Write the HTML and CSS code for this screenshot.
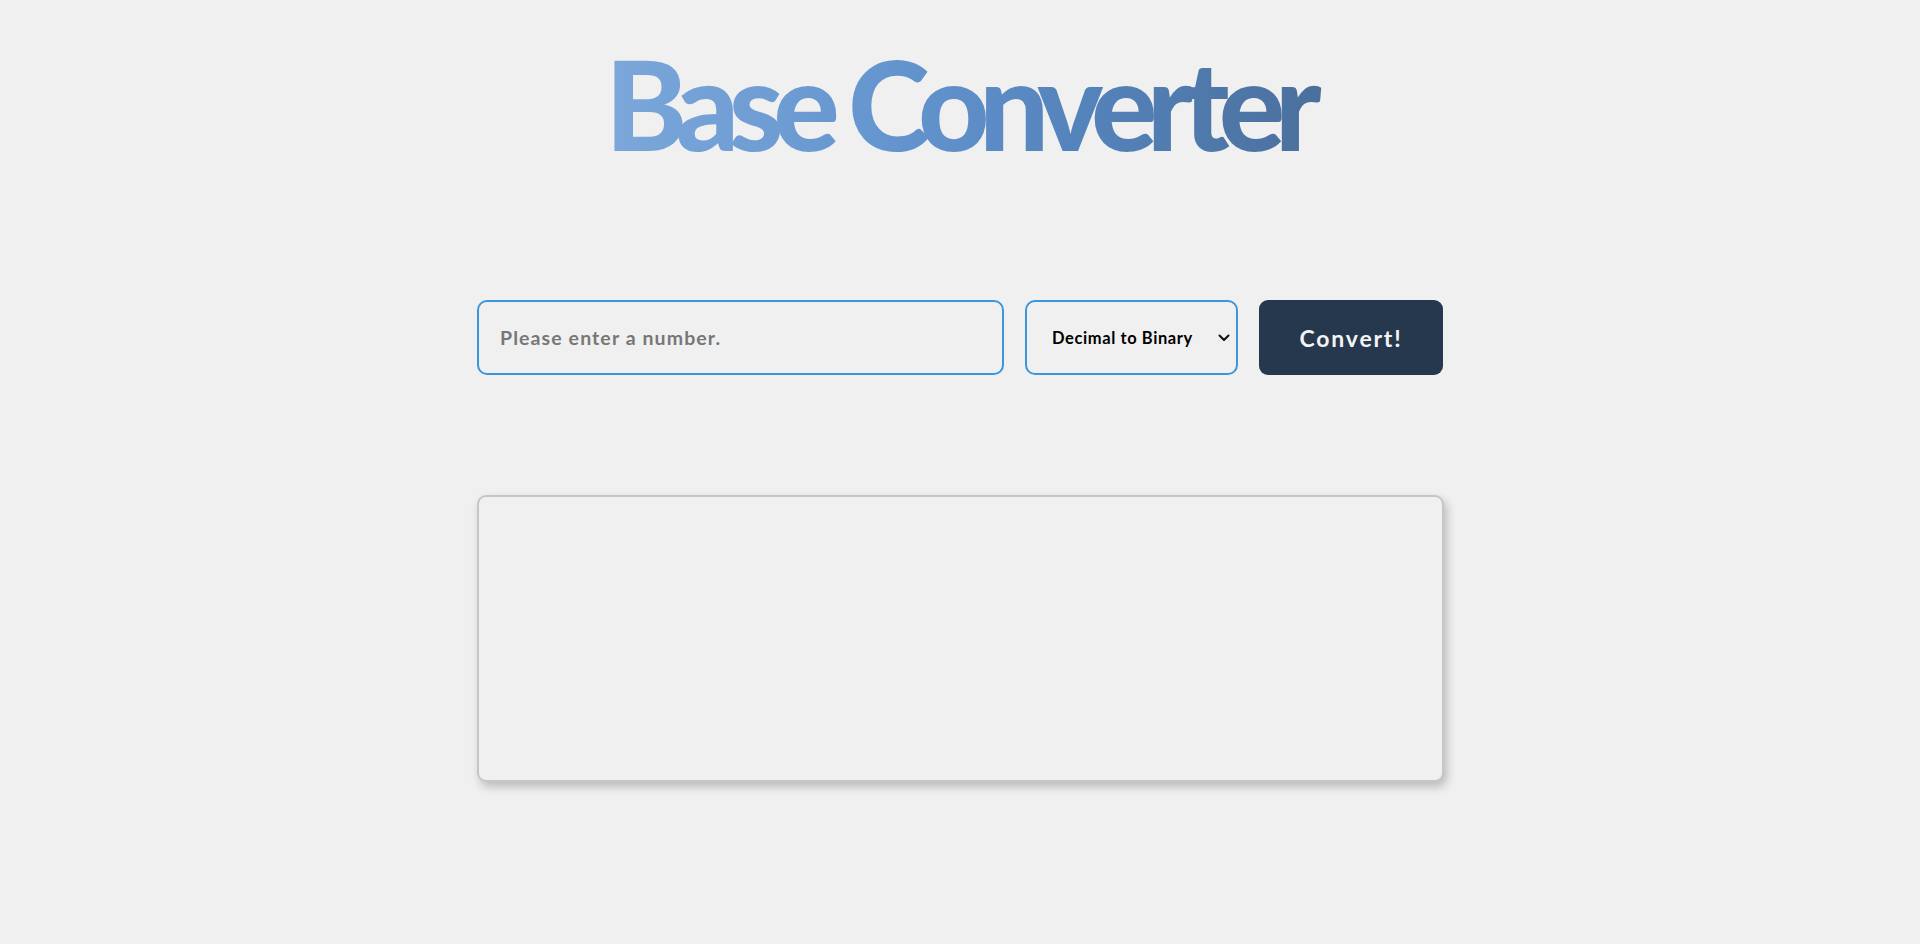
FILE: index.html
```html
<!DOCTYPE html>
<html lang="en">
<head>
<meta charset="utf-8">
<title>Base Converter</title>
<link rel="stylesheet" href="styles.css">
</head>
<body>
<main class="page">
  <h1 class="title">Base Converter</h1>
  <form class="controls" onsubmit="return false;">
    <input class="number-input" type="text" placeholder="Please enter a number.">
    <div class="select-wrap">
      <select class="mode-select">
        <option>Decimal to Binary</option>
        <option>Binary to Decimal</option>
      </select>
      <svg class="chevron" viewBox="0 0 12 8" width="12" height="8"><path d="M1.5 1.5 L6 6 L10.5 1.5" fill="none" stroke="#111" stroke-width="2" stroke-linecap="round" stroke-linejoin="round"/></svg>
    </div>
    <button class="convert-btn" type="submit">Convert!</button>
  </form>
  <section class="result"></section>
</main>
</body>
</html>
```
FILE: styles.css
```css
* { box-sizing: border-box; }
html, body { margin: 0; padding: 0; }
body {
  background: #f0f0f0;
  font-family: "Lato", "Noto Sans", sans-serif;
  min-height: 944px;
}
.page {
  display: flex;
  flex-direction: column;
  align-items: center;
}
.title {
  margin: 33px 0 0;
  font-family: "Lato", sans-serif;
  font-weight: 900;
  font-size: 124px;
  line-height: 140px;
  letter-spacing: -10.5px;
  padding: 0 12px 0 8px;
  background: linear-gradient(90deg, #7ca8da 0%, #6595cf 40%, #5584bd 65%, #4a6f9c 100%);
  -webkit-background-clip: text;
  background-clip: text;
  color: transparent;
}
.controls {
  margin-top: 127px;
  display: flex;
  gap: 21px;
  width: 966px;
}
.number-input {
  width: 527px;
  height: 75px;
  border: 2px solid #3b97dd;
  border-radius: 10px;
  background: #f0f0f0;
  padding: 0 21px;
  font-family: "Lato", sans-serif;
  font-weight: 700;
  font-size: 19.5px;
  letter-spacing: 1.1px;
  color: #333;
  outline: none;
}
.number-input::placeholder { color: #777; }
.select-wrap {
  position: relative;
  width: 213px;
  height: 75px;
}
.mode-select {
  width: 100%;
  height: 100%;
  appearance: none;
  -webkit-appearance: none;
  border: 2px solid #3b97dd;
  border-radius: 10px;
  background: #f0f0f0;
  padding: 0 0 0 25px;
  font-family: "Lato", sans-serif;
  font-weight: 700;
  font-size: 16.5px;
  letter-spacing: 0.6px;
  color: #000;
  outline: none;
}
.chevron {
  position: absolute;
  right: 8px;
  top: 34px;
  pointer-events: none;
}
.convert-btn {
  width: 184px;
  height: 75px;
  border: none;
  border-radius: 9px;
  background: #26384d;
  color: #f4f4f4;
  font-family: "Lato", sans-serif;
  font-weight: 700;
  font-size: 23px;
  letter-spacing: 1.8px;
  cursor: pointer;
}
.result {
  margin-top: 120px;
  width: 967px;
  height: 287px;
  border: 2px solid #c6c6c6;
  border-radius: 9px;
  background: #f0f0f0;
  box-shadow: 3px 5px 10px rgba(0, 0, 0, 0.22);
}
```
